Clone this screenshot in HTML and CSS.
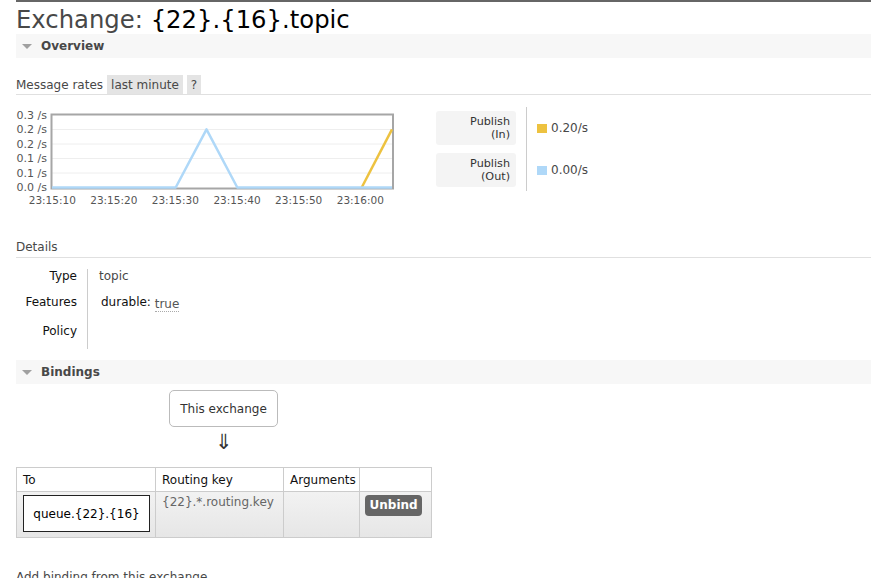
FILE: index.html
```html
<!DOCTYPE html>
<html>
<head>
<meta charset="utf-8">
<link rel="stylesheet" href="styles.css">
</head>
<body>
<div class="main">
  <h1>Exchange: <b>{22}.{16}.topic</b></h1>
  <section>
    <h2 class="bar"><span class="tri"></span>Overview</h2>
    <div class="rates-head"><span>Message rates</span><span class="pill">last minute</span><span class="pill">?</span></div>
    <div class="chart-row">
      <svg class="chart" width="384" height="102" viewBox="16 105 384 102">
        <g stroke="#eeeeee" stroke-width="1">
          <line x1="52" y1="129.5" x2="392" y2="129.5"/>
          <line x1="52" y1="144" x2="392" y2="144"/>
          <line x1="52" y1="158.5" x2="392" y2="158.5"/>
          <line x1="52" y1="173" x2="392" y2="173"/>
        </g>
        <rect x="51.5" y="114.5" width="341.5" height="74" fill="none" stroke="#a6a6a6" stroke-width="2"/>
        <polyline points="361.7,187.5 392,129.3" fill="none" stroke="#edc240" stroke-width="2.5" stroke-linejoin="round"/>
        <polyline points="52,187.5 175.7,187.5 206.5,129.3 237.3,187.5 392,187.5" fill="none" stroke="#afd8f8" stroke-width="2.5" stroke-linejoin="round"/>
        <g class="ylab" text-anchor="end">
          <text x="47" y="118.8">0.3 /s</text>
          <text x="47" y="133.3">0.2 /s</text>
          <text x="47" y="147.8">0.2 /s</text>
          <text x="47" y="162.3">0.1 /s</text>
          <text x="47" y="176.8">0.1 /s</text>
          <text x="47" y="191.3">0.0 /s</text>
        </g>
        <g class="xlab" text-anchor="middle">
          <text x="52.3" y="203.5">23:15:10</text>
          <text x="113.8" y="203.5">23:15:20</text>
          <text x="175.3" y="203.5">23:15:30</text>
          <text x="237" y="203.5">23:15:40</text>
          <text x="298.7" y="203.5">23:15:50</text>
          <text x="360.3" y="203.5">23:16:00</text>
        </g>
      </svg>
      <table class="legend">
        <tr>
          <td class="lbl"><div class="lbox">Publish<br>(In)</div></td>
          <td class="val"><span class="sq yellow"></span>0.20/s</td>
        </tr>
        <tr>
          <td class="lbl"><div class="lbox">Publish<br>(Out)</div></td>
          <td class="val"><span class="sq blue"></span>0.00/s</td>
        </tr>
      </table>
    </div>
    <h3 class="sub">Details</h3>
    <div class="facts">
      <div class="fk r1">Type</div><div class="fv r1">topic</div>
      <div class="fk r2">Features</div><div class="fv r2"><span class="feat">durable:</span> <abbr class="tv">true</abbr></div>
      <div class="fk r3">Policy</div><div class="fv r3"></div>
    </div>
  </section>
  <section>
    <h2 class="bar"><span class="tri"></span>Bindings</h2>
    <div class="bindings">
      <div class="diagram">
        <div class="this-ex">This exchange</div>
        <div class="arrow">⇓</div>
      </div>
      <table class="list">
        <colgroup><col class="c1"><col class="c2"><col class="c3"><col class="c4"></colgroup>
        <thead>
          <tr><th>To</th><th>Routing key</th><th>Arguments</th><th></th></tr>
        </thead>
        <tbody>
          <tr>
            <td><div class="qbox">queue.{22}.{16}</div></td>
            <td class="rk">{22}.*.routing.key</td>
            <td></td>
            <td class="act"><span class="btn">Unbind</span></td>
          </tr>
        </tbody>
      </table>
    </div>
    <h3 class="add">Add binding from this exchange</h3>
  </section>
</div>
</body>
</html>
```
FILE: styles.css
```css
html, body {
  margin: 0;
  padding: 0;
  background: #fff;
}
body {
  font-family: "DejaVu Sans", Verdana, sans-serif;
  font-size: 12px;
  line-height: 14px;
  color: #484848;
}
.main {
  margin-left: 16px;
  border-top: 2px solid #666;
}
h1 {
  margin: 0;
  padding-top: 3px;
  font-size: 24.3px;
  line-height: 29px;
  font-weight: normal;
  color: #484848;
}
h1 b {
  font-weight: normal;
  color: #000;
}
.bar {
  margin: 0;
  height: 24px;
  display: flex;
  align-items: center;
  padding-left: 6px;
  background: #f7f7f7;
  font-size: 12px;
  line-height: 24px;
  font-weight: bold;
  color: #484848;
}
.tri {
  width: 0;
  height: 0;
  border-left: 5px solid transparent;
  border-right: 5px solid transparent;
  border-top: 5px solid #a0a0a0;
  margin-right: 9px;
}
.rates-head {
  margin-top: 17px;
  height: 19px;
  line-height: 20px;
  border-bottom: 1px solid #e0e0e0;
  display: flex;
  gap: 4px;
}
.pill {
  background: #e4e4e4;
  padding: 0 4px;
  color: #484848;
}
.chart-row {
  display: flex;
  align-items: flex-start;
}
.chart {
  display: block;
  margin-top: 10px;
}
.chart text {
  font-family: "DejaVu Sans", Verdana, sans-serif;
  font-size: 10.5px;
  fill: #555;
}
.chart .ylab text {
  font-size: 11px;
}
.legend {
  margin-top: 12px;
  margin-left: 32px;
  border-collapse: collapse;
}
.legend td {
  padding: 4px;
}
.legend td.lbl {
  padding-right: 10px;
}
.lbox {
  width: 74px;
  padding: 3.8px 6px 3.8px 0;
  background: #f4f4f4;
  border-radius: 3px;
  text-align: right;
  font-size: 11.2px;
  line-height: 13.2px;
  color: #333;
}
.legend td.val {
  border-left: 1px solid #ccc;
  padding-left: 10px;
  vertical-align: middle;
  color: #484848;
}
.sq {
  display: inline-block;
  width: 10px;
  height: 9px;
  margin-right: 4px;
  vertical-align: -1px;
}
.yellow { background: #edc240; }
.blue { background: #afd8f8; }
.sub {
  margin: 33px 0 0 0;
  padding-bottom: 3px;
  font-size: 12px;
  line-height: 14px;
  font-weight: normal;
  border-bottom: 1px solid #e0e0e0;
}
.facts {
  margin-top: 11px;
  display: grid;
  grid-template-columns: 71px 1fr;
  grid-template-rows: 25px 25px 30px;
}
.fk {
  text-align: right;
  padding-right: 10px;
  color: #111;
}
.fv {
  border-left: 1px solid #ccc;
  padding-left: 11px;
}
.r2 { padding-top: 1px; }
.r3 { padding-top: 5px; }
.feat {
  color: #111;
  margin-left: 2px;
}
.tv {
  text-decoration: none;
  border-bottom: 1px dotted #aaa;
  color: #555;
  display: inline-block;
  line-height: 14px;
  vertical-align: -2px;
}
section + section .bar {
  margin-top: 11px;
}
.bindings {
  width: 415px;
}
.diagram {
  display: flex;
  flex-direction: column;
  align-items: center;
  padding-top: 6px;
}
.this-ex {
  border: 1px solid #bbb;
  border-radius: 5px;
  padding: 11px 10px 10px;
  line-height: 14px;
  color: #333;
}
.arrow {
  margin-top: 3px;
  font-size: 21px;
  line-height: 25px;
  color: #333;
}
.list {
  margin-top: 12px;
  width: 415px;
  border-collapse: collapse;
  table-layout: fixed;
}
.c1 { width: 139px; }
.c2 { width: 128px; }
.c3 { width: 76px; }
.c4 { width: 72px; }
.list th, .list td {
  border: 1px solid #ccc;
  text-align: left;
  vertical-align: top;
}
.list th {
  font-weight: normal;
  color: #111;
  padding: 5px 6px 4px;
  background: #fff;
}
.list tbody tr {
  background: linear-gradient(#f2f2f2, #e6e6e6);
}
.list td {
  padding: 3px 6px 5px;
}
.list td.act {
  padding-left: 5px;
}
.qbox {
  border: 1px solid #222;
  background: #fff;
  padding: 11px 4px 10px;
  text-align: center;
  color: #000;
  width: 117px;
}
.list td.rk {
  padding-top: 3px;
  color: #666;
}
.btn {
  display: inline-block;
  background: #666;
  color: #fff;
  font-weight: bold;
  border-radius: 4px;
  padding: 0 4.5px;
  line-height: 21px;
}
.add {
  margin: 32px 0 0 0;
  font-size: 12px;
  line-height: 14px;
  font-weight: normal;
}
```
